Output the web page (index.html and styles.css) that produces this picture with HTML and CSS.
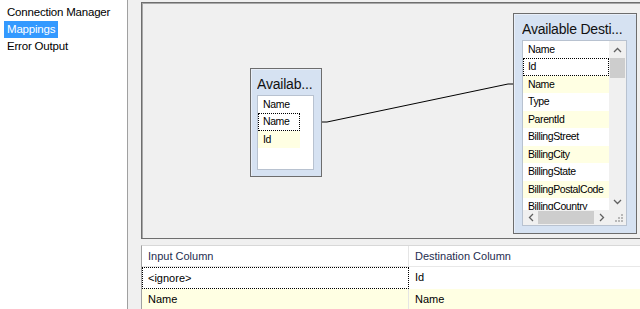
FILE: index.html
```html
<!DOCTYPE html>
<html lang="en">
<head>
    <meta charset="UTF-8">
    <title>Mappings</title>
    <link rel="stylesheet" href="styles.css">
</head>
<body>
    <div class="app">
        <nav class="side">
            <div class="side-item"><span>Connection Manager</span></div>
            <div class="side-item selected"><span>Mappings</span></div>
            <div class="side-item"><span>Error Output</span></div>
        </nav>

        <main class="main">
            <div class="canvas">
                <svg class="links" width="520" height="240">
                    <polyline points="180,119 185,119 366,81 371,81" fill="none" stroke="#000" stroke-width="1"/>
                </svg>

                <div class="node node-source">
                    <div class="node-title">Availab...</div>
                    <div class="list list-small">
                        <div class="list-col">
                            <div class="list-head">Name</div>
                            <div class="list-row focus">Name</div>
                            <div class="list-row alt">Id</div>
                        </div>
                    </div>
                </div>

                <div class="node node-dest">
                    <div class="node-title">Available Desti...</div>
                    <div class="list list-scroll">
                        <div class="list-body">
                            <div class="list-head">Name</div>
                            <div class="list-row focus">Id</div>
                            <div class="list-row alt">Name</div>
                            <div class="list-row">Type</div>
                            <div class="list-row alt">ParentId</div>
                            <div class="list-row">BillingStreet</div>
                            <div class="list-row alt">BillingCity</div>
                            <div class="list-row">BillingState</div>
                            <div class="list-row alt">BillingPostalCode</div>
                            <div class="list-row">BillingCountry</div>
                        </div>
                        <div class="vscroll">
                            <div class="arrow">
                                <svg width="9" height="6"><polyline points="1,5 4.5,1.5 8,5" fill="none" stroke="#606060" stroke-width="1.3"/></svg>
                            </div>
                            <div class="vthumb"></div>
                            <div class="track"></div>
                            <div class="arrow">
                                <svg width="9" height="6"><polyline points="1,1 4.5,4.5 8,1" fill="none" stroke="#606060" stroke-width="1.3"/></svg>
                            </div>
                        </div>
                        <div class="hscroll">
                            <div class="arrow">
                                <svg width="6" height="9"><polyline points="5,1 1.5,4.5 5,8" fill="none" stroke="#606060" stroke-width="1.3"/></svg>
                            </div>
                            <div class="hthumb"></div>
                            <div class="track"></div>
                            <div class="arrow">
                                <svg width="6" height="9"><polyline points="1,1 4.5,4.5 1,8" fill="none" stroke="#606060" stroke-width="1.3"/></svg>
                            </div>
                        </div>
                        <div class="grip">
                            <svg width="10" height="10">
                                <rect x="7" y="1" width="2" height="2" fill="#b8b8b8"/>
                                <rect x="4" y="4" width="2" height="2" fill="#b8b8b8"/>
                                <rect x="7" y="4" width="2" height="2" fill="#b8b8b8"/>
                                <rect x="1" y="7" width="2" height="2" fill="#b8b8b8"/>
                                <rect x="4" y="7" width="2" height="2" fill="#b8b8b8"/>
                                <rect x="7" y="7" width="2" height="2" fill="#b8b8b8"/>
                            </svg>
                        </div>
                    </div>
                </div>
            </div>

            <div class="grid">
                <div class="grid-row grid-head">
                    <div class="cell">Input Column</div>
                    <div class="cell">Destination Column</div>
                </div>
                <div class="grid-row">
                    <div class="cell focus">&lt;ignore&gt;</div>
                    <div class="cell">Id</div>
                </div>
                <div class="grid-row alt">
                    <div class="cell">Name</div>
                    <div class="cell">Name</div>
                </div>
            </div>
        </main>
    </div>
</body>
</html>
```

FILE: styles.css
```css
body {
    margin: 0;
    background-color: #f0f0f0;
    font-family: "Liberation Sans", Arial, sans-serif;
    font-size: 11px;
    color: #000;
    overflow: hidden;
}
.app {
    display: flex;
    height: 309px;
}
.side {
    width: 128px;
    flex: none;
    background-color: #fff;
    border-right: 1px solid #a0a0a0;
    padding: 4px 0 0 4px;
    box-sizing: border-box;
}
.side-item {
    height: 17px;
    line-height: 17px;
    font-size: 11.5px;
    letter-spacing: -0.2px;
}
.side-item span {
    display: inline-block;
    padding: 0 3px;
}
.side-item.selected span {
    background-color: #3399ff;
    color: #fff;
}
.main {
    flex: 1;
    min-width: 0;
    padding-left: 13px;
    display: flex;
    flex-direction: column;
}
.canvas {
    position: relative;
    margin-top: 2px;
    margin-right: -20px;
    height: 237px;
    border: 1px solid #6e6e6e;
    box-shadow: inset 1px 1px 0 #a8a8a8;
    background-color: #f0f0f0;
    box-sizing: border-box;
    flex: none;
}
.links {
    position: absolute;
    left: 0;
    top: 0;
}
.node {
    position: absolute;
    border: 1px solid #6d6d6d;
    background-color: #d6e2f2;
    box-shadow: inset 1px 1px 0 #e8eef8;
    box-sizing: border-box;
    display: flex;
    flex-direction: column;
}
.node-source {
    left: 108px;
    top: 65px;
    width: 72px;
    height: 109px;
    padding: 0 7px 6px 6px;
}
.node-dest {
    left: 371px;
    top: 10px;
    width: 124px;
    height: 221px;
    padding: 0 9px 7px 8px;
}
.node-title {
    height: 26px;
    line-height: 30px;
    font-size: 14px;
    letter-spacing: -0.2px;
    white-space: nowrap;
    overflow: hidden;
    color: #111;
}
.list {
    flex: 1;
    background-color: #fff;
    border: 1px solid #b8c2d0;
    min-height: 0;
}
.list-col {
    width: 42px;
}
.list-head {
    height: 17px;
    line-height: 17px;
    padding-left: 5px;
    letter-spacing: -0.3px;
    font-size: 10.5px;
}
.list-row {
    height: 17.5px;
    line-height: 17px;
    padding-left: 5px;
    font-size: 10.5px;
    letter-spacing: -0.4px;
    box-sizing: border-box;
    white-space: nowrap;
}
.list-row.alt {
    background-color: #ffffe3;
}
.list-row.focus {
    border: 1px dotted #000;
    padding-left: 4px;
    line-height: 15px;
}
.list-scroll {
    display: grid;
    grid-template-columns: 1fr 17px;
    grid-template-rows: 1fr 15px;
}
.list-body {
    overflow: hidden;
}
.vscroll {
    background-color: #f0f0f0;
    display: flex;
    flex-direction: column;
}
.vscroll .arrow {
    height: 17px;
    display: flex;
    align-items: center;
    justify-content: center;
}
.vthumb {
    height: 20px;
    margin: 0 1px;
    background-color: #cdcdcd;
}
.track {
    flex: 1;
}
.hscroll {
    background-color: #f0f0f0;
    display: flex;
}
.hscroll .arrow {
    width: 15px;
    display: flex;
    align-items: center;
    justify-content: center;
}
.hthumb {
    width: 56px;
    margin: 1px 0;
    background-color: #cdcdcd;
}
.grip {
    background-color: #f0f0f0;
    display: flex;
    align-items: flex-end;
    justify-content: flex-end;
    padding: 0 2px 2px 0;
}
.grid {
    margin-top: 6px;
    margin-right: -20px;
    flex: 1;
    background-color: #fff;
    border-top: 1px solid #d8d8d8;
    border-left: 1px solid #a0a0a0;
}
.grid-row {
    display: grid;
    grid-template-columns: 267px 1fr;
    height: 22px;
}
.grid-head {
    height: 20px;
    border-bottom: 1px solid #e8e8e8;
    color: #1e2d4f;
}
.grid-row.alt {
    background-color: #ffffe3;
}
.cell {
    line-height: 20px;
    padding-left: 6px;
    border-right: 1px solid #e5e5e5;
    box-sizing: border-box;
    white-space: nowrap;
}
.cell.focus {
    border: 1px dotted #000;
    padding-left: 5px;
}
```
